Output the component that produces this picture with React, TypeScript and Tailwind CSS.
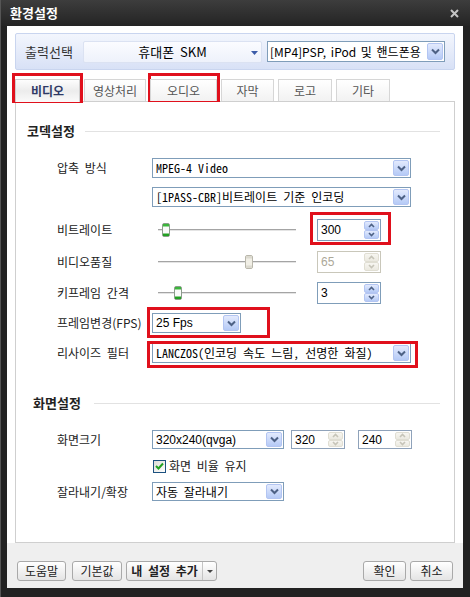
import React from "react";

const KR = "font-['Noto_Sans_CJK_KR',sans-serif]";
const MONO = "font-['Noto_Sans_Mono_CJK_KR','Liberation_Mono','Noto_Sans_CJK_KR',monospace] [word-spacing:0px]";
const LAT = "font-['Liberation_Sans','Noto_Sans_CJK_KR',sans-serif] [word-spacing:0px]";

function Arrow() {
  return (
    <div className="w-[16px] my-[1px] mr-[1px] flex items-center justify-center rounded-[2px] border border-[#b3c5f2] bg-linear-to-b from-[#e3eafd] to-[#b5caf6]">
      <svg width="9" height="7" viewBox="0 0 9 7">
        <path d="M1 1.5 L4.5 5 L8 1.5" fill="none" stroke="#4d6185" strokeWidth="2" />
      </svg>
    </div>
  );
}

function Select({ className, text, font }: { className: string; text: string; font: string }) {
  return (
    <div className={`flex items-stretch border border-[#7f9db9] bg-white ${className}`}>
      <div className={`flex-1 flex items-center pl-[3px] overflow-hidden whitespace-nowrap text-[12px] text-black ${font}`}>
        {text}
      </div>
      <Arrow />
    </div>
  );
}

function SpinHalf({ up, disabled }: { up?: boolean; disabled?: boolean }) {
  return (
    <div
      className={`flex-1 flex items-center justify-center rounded-[2px] border ${
        disabled
          ? "border-[#e0ded3] bg-linear-to-b from-[#f7f6f1] to-[#ebe9e0]"
          : "border-[#b3c5f2] bg-linear-to-b from-[#e3eafd] to-[#b5caf6]"
      }`}
    >
      <svg width="7" height="5" viewBox="0 0 7 5">
        <path
          d={up ? "M1 4 L3.5 1.5 L6 4" : "M1 1 L3.5 3.5 L6 1"}
          fill="none"
          stroke={disabled ? "#c6c4b8" : "#4d6185"}
          strokeWidth="1.6"
        />
      </svg>
    </div>
  );
}

function Spin({
  value,
  className,
  disabled,
  arrowsOff,
}: {
  value: string;
  className: string;
  disabled?: boolean;
  arrowsOff?: boolean;
}) {
  return (
    <div
      className={`flex items-stretch border bg-white ${disabled ? "border-[#c9c7ba]" : arrowsOff ? "border-[#8fa2ba]" : "border-[#7f9db9]"} ${className}`}
    >
      <div className={`flex-1 flex items-center pl-[3px] text-[12px] ${LAT} ${disabled ? "text-[#aca899]" : "text-black"}`}>
        {value}
      </div>
      <div className="w-[15px] my-[1px] mr-[1px] flex flex-col">
        <SpinHalf up disabled={disabled || arrowsOff} />
        <SpinHalf disabled={disabled || arrowsOff} />
      </div>
    </div>
  );
}

function Slider({ pos, disabled }: { pos: number; disabled?: boolean }) {
  return (
    <div className="relative w-[138px] h-full ml-[6px] flex items-center">
      <div className="w-full h-[3px] border-t border-t-[#a4a4a4] border-b border-b-white bg-[#e4e4e4]" />
      <div className="absolute top-1/2 -translate-y-1/2" style={{ left: pos }}>
        <svg width="8" height="14" viewBox="0 0 8 14">
          <rect x="0.5" y="0.5" width="7" height="13" rx="1.5" fill={disabled ? "#f1efe6" : "#fafafa"} stroke={disabled ? "#b9b7ab" : "#8c9c8c"} />
          <rect x="1" y="1" width="6" height="2.5" fill={disabled ? "#dcdad0" : "#3cb53c"} />
          <rect x="1" y="10.5" width="6" height="2.5" fill={disabled ? "#dcdad0" : "#22a022"} />
        </svg>
      </div>
    </div>
  );
}

function Row({ label, className, children }: { label: string; className: string; children?: React.ReactNode }) {
  return (
    <div className={`flex items-stretch ${className}`}>
      <span className="w-[95px] ml-[41px] flex items-center text-[12px] text-[#222] whitespace-nowrap">{label}</span>
      {children}
    </div>
  );
}

function Btn({ label, className, bold }: { label: string; className: string; bold?: boolean }) {
  return (
    <div
      className={`h-[20px] flex items-center justify-center rounded-[3px] border border-[#a9a9a9] bg-linear-to-b from-white to-[#e4e4e4] text-[12px] text-[#222] ${bold ? "font-bold" : ""} ${className}`}
    >
      {label}
    </div>
  );
}

const tabs = [
  { title: "비디오", w: "w-[65px]" },
  { title: "영상처리", w: "w-[62px]" },
  { title: "오디오", w: "w-[67px]" },
  { title: "자막", w: "w-[53px]" },
  { title: "로고", w: "w-[54px]" },
  { title: "기타", w: "w-[54px]" },
];

export default function App() {
  return (
    <div className={`relative w-[470px] h-[597px] bg-[#222] border-l border-[#555] flex flex-col [word-spacing:3px] ${KR}`}>
      {/* title bar */}
      <div className="h-[26px] flex items-center justify-between pl-[9px] pr-[11px] bg-linear-to-b from-[#3d3d3d] to-[#242424]">
        <span className="text-[13px] font-bold text-white">환경설정</span>
        <svg width="9" height="9" viewBox="0 0 9 9">
          <path d="M1 1 L8 8 M8 1 L1 8" stroke="#c4c4c4" strokeWidth="2" />
        </svg>
      </div>

      {/* body */}
      <div className="ml-[6px] mr-[7px] mb-[9px] flex-1 bg-white flex flex-col">
        {/* output bar */}
        <div className="mx-[8px] mt-[7px] h-[37px] flex items-center rounded-[2px] border border-[#c9d5ef] bg-linear-to-b from-[#f3f6fd] to-[#d8e1f6] pl-[9px]">
          <span className="w-[58px] text-[13px] text-[#333]">출력선택</span>
          <div className="w-[179px] h-[22px] relative flex items-center justify-center rounded-[2px] border border-[#dbe2f2] bg-linear-to-b from-[#fbfcff] to-[#eef2fb] text-[13px] text-black">
            휴대폰 SKM
            <svg className="absolute right-[3px] top-[9px]" width="7" height="4" viewBox="0 0 7 4">
              <path d="M0 0 L7 0 L3.5 4 Z" fill="#3c5ca8" />
            </svg>
          </div>
          <div className="ml-[5px] w-[178px] h-[21px] flex items-stretch border border-[#7f9db9] bg-white">
            <div className="flex-1 flex items-center pl-[2px] text-[12px] text-black whitespace-nowrap [word-spacing:2px]">
              [MP4]PSP, iPod 및 핸드폰용
            </div>
            <Arrow />
          </div>
        </div>

        {/* tabs */}
        <div className="mt-[9px] ml-[8px] flex items-end gap-[4px] relative z-10">
          {tabs.map((t, i) =>
            i === 0 ? (
              <div
                key={i}
                className={`${t.w} h-[23px] -mb-px flex items-center justify-center border border-b-0 border-[#cfcfcf] bg-linear-to-b from-[#fdfdfd] via-[#ececec] to-[#fafafa] text-[12px] font-bold text-[#2f3a66]`}
              >
                {t.title}
              </div>
            ) : (
              <div
                key={i}
                className={`${t.w} h-[22px] flex items-center justify-center border border-b-0 border-[#d6d6d6] bg-linear-to-b from-white to-[#f2f2f2] text-[12px] text-[#555]`}
              >
                {t.title}
              </div>
            )
          )}
        </div>

        {/* panel */}
        <div className="mx-[8px] w-[440px] h-[442px] border border-[#cfcfcf] bg-white flex flex-col">
          <div className="flex items-center h-[16px] mt-[21px] pl-[11px] pr-[14px]">
            <span className="text-[13px] font-bold text-[#222]">코덱설정</span>
            <div className="flex-1 h-px bg-[#e2e2e2] ml-[10px]" />
          </div>

          <Row label="압축 방식" className="h-[20px] mt-[19px]">
            <Select className="w-[259px]" text="MPEG-4 Video" font={MONO} />
          </Row>
          <Row label="" className="h-[20px] mt-[9px]">
            <Select className="w-[259px]" text="[1PASS-CBR]비트레이트 기준 인코딩" font={MONO} />
          </Row>
          <Row label="비트레이트" className="h-[22px] mt-[12px]">
            <Slider pos={4} />
            <Spin value="300" className="w-[64px] ml-[21px]" />
          </Row>
          <Row label="비디오품질" className="h-[22px] mt-[10px]">
            <Slider pos={87} disabled />
            <Spin value="65" className="w-[64px] ml-[21px]" disabled />
          </Row>
          <Row label="키프레임 간격" className="h-[22px] mt-[9px]">
            <Slider pos={16} />
            <Spin value="3" className="w-[64px] ml-[21px]" />
          </Row>
          <Row label="프레임변경(FPS)" className="h-[20px] mt-[9px]">
            <Select className="w-[89px]" text="25 Fps" font={LAT} />
          </Row>
          <Row label="리사이즈 필터" className="h-[20px] mt-[10px]">
            <Select className="w-[259px]" text="LANCZOS(인코딩 속도 느림, 선명한 화질)" font={MONO} />
          </Row>

          <div className="flex items-center h-[16px] mt-[32px] pl-[17px] pr-[14px]">
            <span className="text-[13px] font-bold text-[#222]">화면설정</span>
            <div className="flex-1 h-px bg-[#e2e2e2] ml-[13px]" />
          </div>

          <Row label="화면크기" className="h-[19px] mt-[19px]">
            <Select className="w-[132px]" text="320x240(qvga)" font={LAT} />
            <Spin value="320" className="w-[54px] ml-[7px]" arrowsOff />
            <Spin value="240" className="w-[54px] ml-[13px]" arrowsOff />
          </Row>
          <Row label="" className="h-[14px] mt-[10px]">
            <div className="flex items-center gap-[3px] ml-[1px]">
              <div className="w-[13px] h-[13px] border border-[#1c5180] bg-linear-to-br from-[#dcdcd7] to-white flex items-center justify-center">
                <svg width="9" height="8" viewBox="0 0 9 8">
                  <path d="M1 4 L3.5 6.5 L8 1.5" fill="none" stroke="#21a121" strokeWidth="2" />
                </svg>
              </div>
              <span className="text-[12px] text-[#222]">화면 비율 유지</span>
            </div>
          </Row>
          <Row label="잘라내기/확장" className="h-[19px] mt-[9px]">
            <Select className="w-[132px]" text="자동 잘라내기" font={KR} />
          </Row>
        </div>

        {/* footer */}
        <div className="flex-1 bg-[#efefef] flex items-start pt-[18px] px-[10px]">
          <Btn label="도움말" className="w-[49px]" />
          <Btn label="기본값" className="w-[50px] ml-[6px]" />
          <div className="ml-[4px] h-[20px] flex rounded-[3px] border border-[#a9a9a9] bg-linear-to-b from-white to-[#e4e4e4]">
            <span className="w-[76px] flex items-center justify-center text-[12px] font-bold text-[#222] border-r border-[#c4c4c4]">
              내 설정 추가
            </span>
            <span className="w-[13px] flex items-center justify-center">
              <svg width="6" height="3" viewBox="0 0 6 3">
                <path d="M0 0 L6 0 L3 3 Z" fill="#444" />
              </svg>
            </span>
          </div>
          <div className="flex-1" />
          <Btn label="확인" className="w-[43px]" />
          <Btn label="취소" className="w-[43px] ml-[4px]" />
        </div>
      </div>

      {/* red annotation boxes */}
      <div className="absolute left-[11px] top-[73px] w-[71px] h-[30px] border-[3px] border-[#e0101c]" />
      <div className="absolute left-[147px] top-[73px] w-[72px] h-[29px] border-[3px] border-[#e0101c]" />
      <div className="absolute left-[309px] top-[212px] w-[81px] h-[33px] border-[3px] border-[#e0101c]" />
      <div className="absolute left-[146px] top-[307px] w-[123px] h-[31px] border-[3px] border-[#e0101c]" />
      <div className="absolute left-[146px] top-[341px] w-[271px] h-[27px] border-[3px] border-[#e0101c]" />
    </div>
  );
}
